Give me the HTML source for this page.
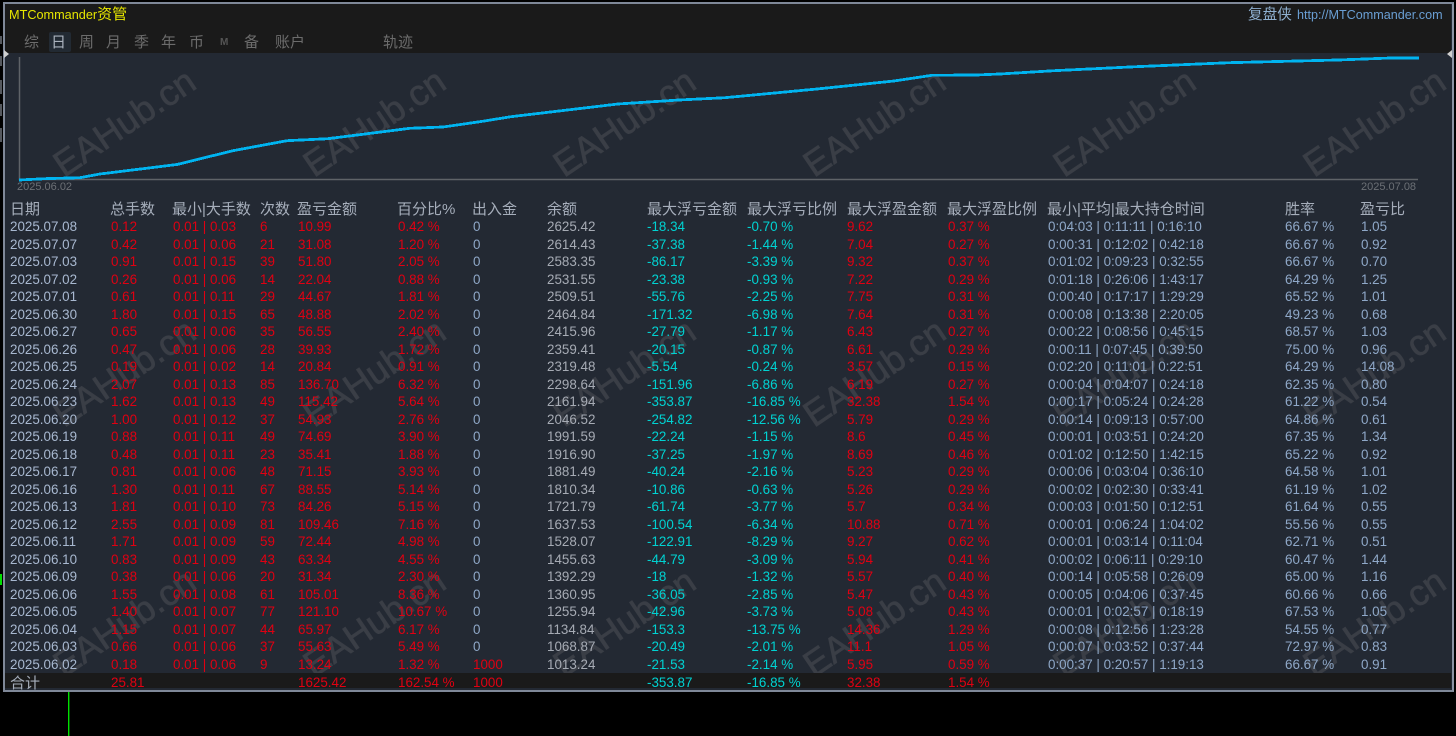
<!DOCTYPE html>
<html>
<head>
<meta charset="utf-8">
<style>
html,body{margin:0;padding:0;background:#000;width:1456px;height:736px;overflow:hidden}
body{position:relative;font-family:"Liberation Sans","Noto Sans CJK SC",sans-serif}
.a{position:absolute;white-space:nowrap}
#panel{position:absolute;left:3px;top:2px;width:1447px;height:686px;background:#232933;border:2px solid #7f8898;border-right-color:#8b93a3;overflow:hidden}
#top{position:absolute;left:5px;top:4px;width:1446px;height:49px;background:#1a1a1a}
#foot{position:absolute;left:5px;top:673px;width:1446px;height:15px;background:#1a1a1a}
.t{position:absolute;top:34px;height:18px;line-height:18px;font-size:15px;color:#6c6c6c}
.h{position:absolute;top:201px;height:18px;line-height:18px;font-size:15px;color:#a6aebb;white-space:nowrap;filter:blur(.3px)}
#rows{position:absolute;left:0;top:218px;width:1456px;font-size:13.4px;line-height:18px;filter:blur(.3px)}
.r{position:relative;height:17.52px;width:1456px}
.r span{position:absolute;top:0;white-space:nowrap;color:#e00012}
.r span:nth-child(1){left:10px;color:#a8b8d0}
.r span:nth-child(2){left:111px}
.r span:nth-child(3){left:173px}
.r span:nth-child(4){left:260px}
.r span:nth-child(5){left:298px}
.r span:nth-child(6){left:398px}
.r span:nth-child(7){left:473px;color:#8fa8c8}
.r span:nth-child(8){left:547px;color:#a6abb4}
.r span:nth-child(9){left:647px;color:#00d2d2}
.r span:nth-child(10){left:747px;color:#00d2d2}
.r span:nth-child(11){left:847px}
.r span:nth-child(12){left:948px}
.r span:nth-child(13){left:1048px;color:#8fa8c8}
.r span:nth-child(14){left:1285px;color:#8fa8c8}
.r span:nth-child(15){left:1361px;color:#8fa8c8}
.r span.m{color:#e00012}
</style>
</head>
<body>
<div id="panel"></div>
<svg class="a" style="left:0;top:0" width="1456" height="736" viewBox="0 0 1456 736">
<defs><clipPath id="c"><rect x="5" y="53" width="1446" height="635"/></clipPath></defs>
<g clip-path="url(#c)" font-family="Liberation Sans" font-size="36" fill="#3a3e46" stroke="#3a3e46" stroke-width=".7">
<text transform="translate(64 178) rotate(-34)">EAHub.cn</text>
<text transform="translate(314 178) rotate(-34)">EAHub.cn</text>
<text transform="translate(564 178) rotate(-34)">EAHub.cn</text>
<text transform="translate(814 178) rotate(-34)">EAHub.cn</text>
<text transform="translate(1064 178) rotate(-34)">EAHub.cn</text>
<text transform="translate(1314 178) rotate(-34)">EAHub.cn</text>
<text transform="translate(64 428) rotate(-34)">EAHub.cn</text>
<text transform="translate(314 428) rotate(-34)">EAHub.cn</text>
<text transform="translate(564 428) rotate(-34)">EAHub.cn</text>
<text transform="translate(814 428) rotate(-34)">EAHub.cn</text>
<text transform="translate(1064 428) rotate(-34)">EAHub.cn</text>
<text transform="translate(1314 428) rotate(-34)">EAHub.cn</text>
<text transform="translate(64 678) rotate(-34)">EAHub.cn</text>
<text transform="translate(314 678) rotate(-34)">EAHub.cn</text>
<text transform="translate(564 678) rotate(-34)">EAHub.cn</text>
<text transform="translate(814 678) rotate(-34)">EAHub.cn</text>
<text transform="translate(1064 678) rotate(-34)">EAHub.cn</text>
<text transform="translate(1314 678) rotate(-34)">EAHub.cn</text>
</g>
<path d="M19.5 57V179.5H1418" fill="none" stroke="#5f6368" stroke-width="1.5"/>
<polyline fill="none" stroke="#00b4f0" stroke-width="2.8" shape-rendering="crispEdges" points="19,180 47,178.6 80,177.7 100,174 177,164.5 233,150.7 287,140.7 328,138.7 410,128.3 443,127 480,121.7 511,116.7 618,104 679,100 725,97.7 817,89 894,81 932,75.3 976,75 1000,74 1054,70.7 1136,66.7 1229,62.7 1338,60 1391,58 1419,58"/>
</svg>
<div id="top"></div>
<div id="foot"></div>
<svg class="a" style="left:0;top:0" width="1456" height="736">
<path d="M4 50l5 4-5 4z" fill="#d0d0d0"/>
<path d="M1452 50l-5 4 5 4z" fill="#d0d0d0"/>
<rect x="68" y="692" width="1.4" height="44" fill="#00e000"/>
<rect x="0" y="574" width="2" height="11" fill="#00e000"/>
<rect x="0" y="36" width="2" height="8" fill="#55595f"/>
<rect x="0" y="56" width="2" height="10" fill="#55595f"/>
<rect x="0" y="80" width="2" height="14" fill="#55595f"/>
<rect x="0" y="104" width="2" height="12" fill="#55595f"/>
<rect x="0" y="128" width="2" height="14" fill="#55595f"/>
</svg>
<div class="a" style="left:9px;top:6px;height:18px;line-height:18px;font-size:12.7px;color:#e6e600">MTCommander<span style="font-size:15px">资管</span></div>
<div class="a" style="left:1248px;top:6px;height:18px;line-height:18px;font-size:14.6px;color:#8fb0d0">复盘侠</div>
<div class="a" style="left:1297px;top:6px;height:18px;line-height:18px;font-size:12.6px;color:#6a9fd4">http://MTCommander.com</div>
<div class="a" style="left:49px;top:32px;width:22px;height:20px;background:#222a33;border-radius:2px"></div>
<div class="t" style="left:24px">综</div>
<div class="t" style="left:51px;color:#aab2bd">日</div>
<div class="t" style="left:79px">周</div>
<div class="t" style="left:106px">月</div>
<div class="t" style="left:134px">季</div>
<div class="t" style="left:161px">年</div>
<div class="t" style="left:189px">币</div>
<div class="t" style="left:220px;font-size:10px;font-weight:bold;color:#555">M</div>
<div class="t" style="left:244px">备</div>
<div class="t" style="left:275px">账户</div>
<div class="t" style="left:383px">轨迹</div>
<div class="a" style="left:17px;top:181px;height:13px;line-height:13px;font-size:11px;color:#6c7076">2025.06.02</div>
<div class="a" style="left:1361px;top:181px;height:13px;line-height:13px;font-size:11px;color:#6c7076">2025.07.08</div>
<div class="h" style="left:10px">日期</div>
<div class="h" style="left:110px">总手数</div>
<div class="h" style="left:172px">最小|大手数</div>
<div class="h" style="left:260px">次数</div>
<div class="h" style="left:297px">盈亏金额</div>
<div class="h" style="left:397px">百分比%</div>
<div class="h" style="left:472px">出入金</div>
<div class="h" style="left:547px">余额</div>
<div class="h" style="left:647px">最大浮亏金额</div>
<div class="h" style="left:747px">最大浮亏比例</div>
<div class="h" style="left:847px">最大浮盈金额</div>
<div class="h" style="left:947px">最大浮盈比例</div>
<div class="h" style="left:1047px">最小|平均|最大持仓时间</div>
<div class="h" style="left:1285px">胜率</div>
<div class="h" style="left:1360px">盈亏比</div>
<div id="rows">
<div class="r"><span>2025.07.08</span><span>0.12</span><span>0.01 | 0.03</span><span>6</span><span>10.99</span><span>0.42 %</span><span>0</span><span>2625.42</span><span>-18.34</span><span>-0.70 %</span><span>9.62</span><span>0.37 %</span><span>0:04:03 | 0:11:11 | 0:16:10</span><span>66.67 %</span><span>1.05</span></div>
<div class="r"><span>2025.07.07</span><span>0.42</span><span>0.01 | 0.06</span><span>21</span><span>31.08</span><span>1.20 %</span><span>0</span><span>2614.43</span><span>-37.38</span><span>-1.44 %</span><span>7.04</span><span>0.27 %</span><span>0:00:31 | 0:12:02 | 0:42:18</span><span>66.67 %</span><span>0.92</span></div>
<div class="r"><span>2025.07.03</span><span>0.91</span><span>0.01 | 0.15</span><span>39</span><span>51.80</span><span>2.05 %</span><span>0</span><span>2583.35</span><span>-86.17</span><span>-3.39 %</span><span>9.32</span><span>0.37 %</span><span>0:01:02 | 0:09:23 | 0:32:55</span><span>66.67 %</span><span>0.70</span></div>
<div class="r"><span>2025.07.02</span><span>0.26</span><span>0.01 | 0.06</span><span>14</span><span>22.04</span><span>0.88 %</span><span>0</span><span>2531.55</span><span>-23.38</span><span>-0.93 %</span><span>7.22</span><span>0.29 %</span><span>0:01:18 | 0:26:06 | 1:43:17</span><span>64.29 %</span><span>1.25</span></div>
<div class="r"><span>2025.07.01</span><span>0.61</span><span>0.01 | 0.11</span><span>29</span><span>44.67</span><span>1.81 %</span><span>0</span><span>2509.51</span><span>-55.76</span><span>-2.25 %</span><span>7.75</span><span>0.31 %</span><span>0:00:40 | 0:17:17 | 1:29:29</span><span>65.52 %</span><span>1.01</span></div>
<div class="r"><span>2025.06.30</span><span>1.80</span><span>0.01 | 0.15</span><span>65</span><span>48.88</span><span>2.02 %</span><span>0</span><span>2464.84</span><span>-171.32</span><span>-6.98 %</span><span>7.64</span><span>0.31 %</span><span>0:00:08 | 0:13:38 | 2:20:05</span><span>49.23 %</span><span>0.68</span></div>
<div class="r"><span>2025.06.27</span><span>0.65</span><span>0.01 | 0.06</span><span>35</span><span>56.55</span><span>2.40 %</span><span>0</span><span>2415.96</span><span>-27.79</span><span>-1.17 %</span><span>6.43</span><span>0.27 %</span><span>0:00:22 | 0:08:56 | 0:45:15</span><span>68.57 %</span><span>1.03</span></div>
<div class="r"><span>2025.06.26</span><span>0.47</span><span>0.01 | 0.06</span><span>28</span><span>39.93</span><span>1.72 %</span><span>0</span><span>2359.41</span><span>-20.15</span><span>-0.87 %</span><span>6.61</span><span>0.29 %</span><span>0:00:11 | 0:07:45 | 0:39:50</span><span>75.00 %</span><span>0.96</span></div>
<div class="r"><span>2025.06.25</span><span>0.19</span><span>0.01 | 0.02</span><span>14</span><span>20.84</span><span>0.91 %</span><span>0</span><span>2319.48</span><span>-5.54</span><span>-0.24 %</span><span>3.57</span><span>0.15 %</span><span>0:02:20 | 0:11:01 | 0:22:51</span><span>64.29 %</span><span>14.08</span></div>
<div class="r"><span>2025.06.24</span><span>2.07</span><span>0.01 | 0.13</span><span>85</span><span>136.70</span><span>6.32 %</span><span>0</span><span>2298.64</span><span>-151.96</span><span>-6.86 %</span><span>6.19</span><span>0.27 %</span><span>0:00:04 | 0:04:07 | 0:24:18</span><span>62.35 %</span><span>0.80</span></div>
<div class="r"><span>2025.06.23</span><span>1.62</span><span>0.01 | 0.13</span><span>49</span><span>115.42</span><span>5.64 %</span><span>0</span><span>2161.94</span><span>-353.87</span><span>-16.85 %</span><span>32.38</span><span>1.54 %</span><span>0:00:17 | 0:05:24 | 0:24:28</span><span>61.22 %</span><span>0.54</span></div>
<div class="r"><span>2025.06.20</span><span>1.00</span><span>0.01 | 0.12</span><span>37</span><span>54.93</span><span>2.76 %</span><span>0</span><span>2046.52</span><span>-254.82</span><span>-12.56 %</span><span>5.79</span><span>0.29 %</span><span>0:00:14 | 0:09:13 | 0:57:00</span><span>64.86 %</span><span>0.61</span></div>
<div class="r"><span>2025.06.19</span><span>0.88</span><span>0.01 | 0.11</span><span>49</span><span>74.69</span><span>3.90 %</span><span>0</span><span>1991.59</span><span>-22.24</span><span>-1.15 %</span><span>8.6</span><span>0.45 %</span><span>0:00:01 | 0:03:51 | 0:24:20</span><span>67.35 %</span><span>1.34</span></div>
<div class="r"><span>2025.06.18</span><span>0.48</span><span>0.01 | 0.11</span><span>23</span><span>35.41</span><span>1.88 %</span><span>0</span><span>1916.90</span><span>-37.25</span><span>-1.97 %</span><span>8.69</span><span>0.46 %</span><span>0:01:02 | 0:12:50 | 1:42:15</span><span>65.22 %</span><span>0.92</span></div>
<div class="r"><span>2025.06.17</span><span>0.81</span><span>0.01 | 0.06</span><span>48</span><span>71.15</span><span>3.93 %</span><span>0</span><span>1881.49</span><span>-40.24</span><span>-2.16 %</span><span>5.23</span><span>0.29 %</span><span>0:00:06 | 0:03:04 | 0:36:10</span><span>64.58 %</span><span>1.01</span></div>
<div class="r"><span>2025.06.16</span><span>1.30</span><span>0.01 | 0.11</span><span>67</span><span>88.55</span><span>5.14 %</span><span>0</span><span>1810.34</span><span>-10.86</span><span>-0.63 %</span><span>5.26</span><span>0.29 %</span><span>0:00:02 | 0:02:30 | 0:33:41</span><span>61.19 %</span><span>1.02</span></div>
<div class="r"><span>2025.06.13</span><span>1.81</span><span>0.01 | 0.10</span><span>73</span><span>84.26</span><span>5.15 %</span><span>0</span><span>1721.79</span><span>-61.74</span><span>-3.77 %</span><span>5.7</span><span>0.34 %</span><span>0:00:03 | 0:01:50 | 0:12:51</span><span>61.64 %</span><span>0.55</span></div>
<div class="r"><span>2025.06.12</span><span>2.55</span><span>0.01 | 0.09</span><span>81</span><span>109.46</span><span>7.16 %</span><span>0</span><span>1637.53</span><span>-100.54</span><span>-6.34 %</span><span>10.88</span><span>0.71 %</span><span>0:00:01 | 0:06:24 | 1:04:02</span><span>55.56 %</span><span>0.55</span></div>
<div class="r"><span>2025.06.11</span><span>1.71</span><span>0.01 | 0.09</span><span>59</span><span>72.44</span><span>4.98 %</span><span>0</span><span>1528.07</span><span>-122.91</span><span>-8.29 %</span><span>9.27</span><span>0.62 %</span><span>0:00:01 | 0:03:14 | 0:11:04</span><span>62.71 %</span><span>0.51</span></div>
<div class="r"><span>2025.06.10</span><span>0.83</span><span>0.01 | 0.09</span><span>43</span><span>63.34</span><span>4.55 %</span><span>0</span><span>1455.63</span><span>-44.79</span><span>-3.09 %</span><span>5.94</span><span>0.41 %</span><span>0:00:02 | 0:06:11 | 0:29:10</span><span>60.47 %</span><span>1.44</span></div>
<div class="r"><span>2025.06.09</span><span>0.38</span><span>0.01 | 0.06</span><span>20</span><span>31.34</span><span>2.30 %</span><span>0</span><span>1392.29</span><span>-18</span><span>-1.32 %</span><span>5.57</span><span>0.40 %</span><span>0:00:14 | 0:05:58 | 0:26:09</span><span>65.00 %</span><span>1.16</span></div>
<div class="r"><span>2025.06.06</span><span>1.55</span><span>0.01 | 0.08</span><span>61</span><span>105.01</span><span>8.36 %</span><span>0</span><span>1360.95</span><span>-36.05</span><span>-2.85 %</span><span>5.47</span><span>0.43 %</span><span>0:00:05 | 0:04:06 | 0:37:45</span><span>60.66 %</span><span>0.66</span></div>
<div class="r"><span>2025.06.05</span><span>1.40</span><span>0.01 | 0.07</span><span>77</span><span>121.10</span><span>10.67 %</span><span>0</span><span>1255.94</span><span>-42.96</span><span>-3.73 %</span><span>5.08</span><span>0.43 %</span><span>0:00:01 | 0:02:57 | 0:18:19</span><span>67.53 %</span><span>1.05</span></div>
<div class="r"><span>2025.06.04</span><span>1.15</span><span>0.01 | 0.07</span><span>44</span><span>65.97</span><span>6.17 %</span><span>0</span><span>1134.84</span><span>-153.3</span><span>-13.75 %</span><span>14.36</span><span>1.29 %</span><span>0:00:08 | 0:12:56 | 1:23:28</span><span>54.55 %</span><span>0.77</span></div>
<div class="r"><span>2025.06.03</span><span>0.66</span><span>0.01 | 0.06</span><span>37</span><span>55.63</span><span>5.49 %</span><span>0</span><span>1068.87</span><span>-20.49</span><span>-2.01 %</span><span>11.1</span><span>1.05 %</span><span>0:00:07 | 0:03:52 | 0:37:44</span><span>72.97 %</span><span>0.83</span></div>
<div class="r"><span>2025.06.02</span><span>0.18</span><span>0.01 | 0.06</span><span>9</span><span>13.24</span><span>1.32 %</span><span class="m">1000</span><span>1013.24</span><span>-21.53</span><span>-2.14 %</span><span>5.95</span><span>0.59 %</span><span>0:00:37 | 0:20:57 | 1:19:13</span><span>66.67 %</span><span>0.91</span></div>
<div class="r" style="top:.5px"><span style="font-size:15px;color:#a6aebb;top:1px">合计</span><span>25.81</span><span></span><span></span><span>1625.42</span><span>162.54 %</span><span class="m">1000</span><span></span><span>-353.87</span><span>-16.85 %</span><span>32.38</span><span>1.54 %</span><span></span><span></span><span></span></div>
</div>
</body>
</html>
